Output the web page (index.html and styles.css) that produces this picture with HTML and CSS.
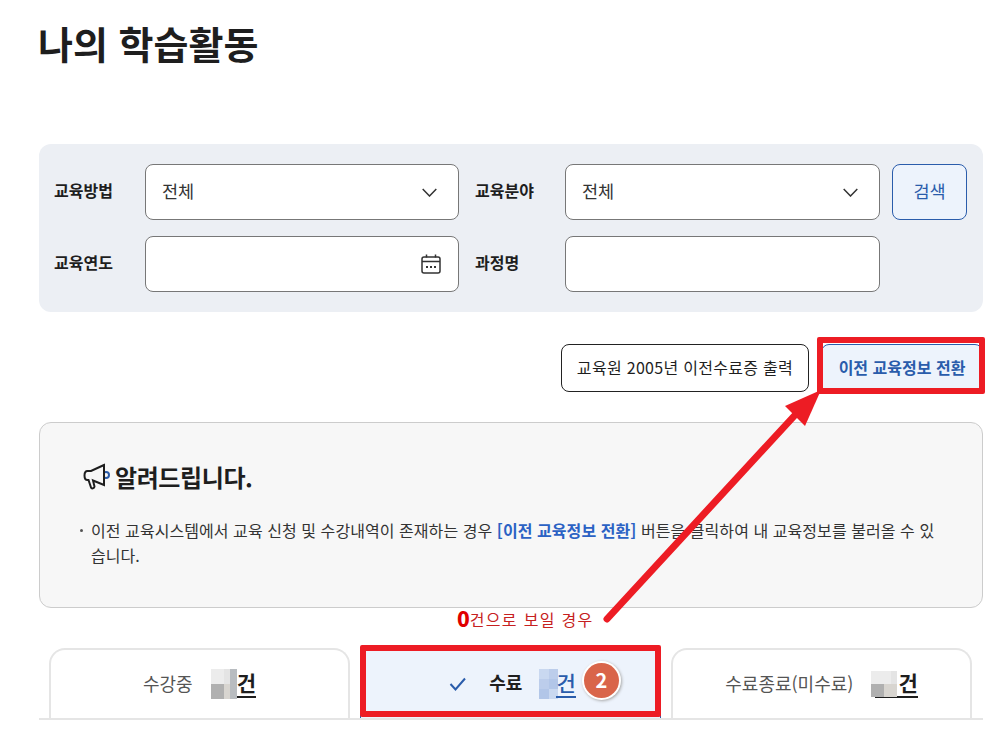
FILE: index.html
```html
<!DOCTYPE html>
<html lang="ko">

<head>
    <meta charset="UTF-8">
    <meta name="viewport" content="width=device-width, initial-scale=1.0">
    <title>나의 학습활동</title>
    <link rel="stylesheet" href="styles.css">
</head>

<body>
    <div class="page">
        <h1>나의 학습활동</h1>

        <form class="filter">
            <label class="filter-label">교육방법</label>
            <div class="field">
                <span>전체</span>
                <svg class="chevron" width="15" height="9" viewBox="0 0 15 9"><path d="M.7 1 7.500 8 14.300 1" /></svg>
            </div>
            <label class="filter-label filter-label-right">교육분야</label>
            <div class="field">
                <span>전체</span>
                <svg class="chevron" width="15" height="9" viewBox="0 0 15 9"><path d="M.7 1 7.500 8 14.300 1" /></svg>
            </div>
            <button type="button" class="search">검색</button>
            <label class="filter-label">교육연도</label>
            <div class="field">
                <span></span>
                <svg class="calendar" width="22" height="22" viewBox="0 0 22 22">
                    <rect x="2" y="4" width="18" height="16" rx="2" />
                    <path d="M2 8.500H20M6.500 1.500V4.500M15.500 1.500V4.500" />
                    <path class="dots" d="M6 14H8M10 14H12M14 14H16" />
                </svg>
            </div>
            <label class="filter-label filter-label-right">과정명</label>
            <div class="field"></div>
        </form>

        <div class="actions">
            <button type="button" class="btn-print">교육원 2005년 이전수료증 출력</button>
            <button type="button" class="btn-switch">이전 교육정보 전환</button>
        </div>

        <section class="notice">
            <h2>
                <svg width="27" height="28" viewBox="0 0 27 28">
                    <circle class="horn-dot" cx="23" cy="13" r="3" />
                    <path d="M21 3 8 9H4.500C2.500 9 1.500 11 1.500 13.500S2.500 18 4.500 18H5.500L8 25.500C8.500 27 11.500 26.500 11.500 24.500L10 18.500 21 23Z" />
                </svg>
                알려드립니다.
            </h2>
            <ul>
                <li>이전 교육시스템에서 교육 신청 및 수강내역이 존재하는 경우 <b>[이전 교육정보 전환]</b> 버튼을 클릭하여 내 교육정보를 불러올 수 있습니다.</li>
            </ul>
        </section>

        <p class="zero-note"><b>0</b>건으로 보일 경우</p>

        <div class="tabs">
            <div class="tab">
                <span class="tab-name">수강중</span>
                <span class="count"><span class="blur"><i class="p1"></i><i class="p1"></i><i class="p5"></i><i class="p4"></i><i class="p3"></i><i class="p3"></i><i class="p2"></i><i class="p4"></i></span><u>건</u></span>
            </div>
            <div class="tab tab-active">
                <svg class="check" width="18" height="14" viewBox="0 0 18 14"><path d="M1.500 7 6.500 12.500 16 1.500" /></svg>
                <span class="tab-name">수료</span>
                <span class="count"><span class="blur blur-blue"><i class="b1"></i><i class="b2"></i><i class="b2"></i><i class="b3"></i><i class="b3"></i><i class="b1"></i></span><u>건</u></span>
            </div>
            <div class="tab">
                <span class="tab-name">수료종료(미수료)</span>
                <span class="count count-wide"><span class="blur blur-short"><i class="p1"></i><i class="p1"></i><i class="p1"></i><i class="p5"></i><i class="p3"></i><i class="p3"></i><i class="p2"></i><i class="p2"></i></span><u>건</u></span>
            </div>
        </div>
    </div>

    <!-- screenshot annotations -->
    <div class="mark mark-switch"></div>
    <div class="mark mark-tab"></div>
    <div class="badge">2</div>
    <svg class="arrow" width="1003" height="737" viewBox="0 0 1003 737">
        <path class="arrow-line" d="M607 619 796 414" />
        <path class="arrow-head" d="M821 390 785 406 805 426Z" />
    </svg>
</body>

</html>
```

FILE: styles.css
```css
body {
    margin: 0;
    font-family: "Noto Sans CJK KR", "Noto Sans", sans-serif;
    color: #1e1e1e;
    background: #fff;
    overflow: hidden;
}

.page {
    width: 944px;
    height: 737px;
    padding-left: 39px;
    overflow: hidden;
}

h1 {
    margin: 0 0 0 -1px;
    height: 144px;
    padding-top: 17px;
    box-sizing: border-box;
    font-size: 38px;
    line-height: 52px;
    font-weight: 700;
}

.filter {
    display: grid;
    grid-template-columns: 106px 314px 106px 315px 75px;
    grid-auto-rows: 56px;
    row-gap: 16px;
    align-items: center;
    height: 168px;
    box-sizing: border-box;
    padding: 20px 16px 20px 0;
    background: #eceff4;
    border-radius: 12px;
}

.filter-label {
    padding: 0 0 4px 15px;
    font-size: 16px;
    font-weight: 700;
}

.filter-label-right {
    padding-left: 16px;
}

.field {
    display: flex;
    justify-content: space-between;
    align-items: center;
    height: 56px;
    box-sizing: border-box;
    padding: 0 21px 0 16px;
    background: #fff;
    border: 1px solid #777;
    border-radius: 8px;
    font-size: 17.500px;
    color: #333;
}

.field span {
    padding-bottom: 4px;
}

.field .calendar {
    margin-right: -5px;
}

.chevron path {
    fill: none;
    stroke: #333;
    stroke-width: 1.500;
}

.calendar rect,
.calendar path {
    fill: none;
    stroke: #333;
    stroke-width: 1.500;
}

.calendar .dots {
    stroke-width: 2;
}

.search {
    height: 56px;
    margin-left: 12px;
    width: 75px;
    padding: 0 0 4px;
    font: inherit;
    font-size: 17.500px;
    color: #2a5cab;
    background: #edf3fc;
    border: 1px solid #2a5cab;
    border-radius: 8px;
}

.actions {
    display: flex;
    justify-content: flex-end;
    align-items: center;
    gap: 12px;
    height: 48px;
    margin-top: 32px;
}

.actions button {
    height: 48px;
    padding: 0 0 3px;
    font: inherit;
    font-size: 16px;
}

.btn-print {
    width: 248px;
    background: #fff;
    color: #1e1e1e;
    border: 1px solid #222;
    border-radius: 8px;
    letter-spacing: 0.300px;
}

.btn-switch {
    width: 162px;
    color: #2a5cab;
    background: #edf3fc;
    border: 1px solid #2a5cab;
    border-radius: 8px;
}

.actions .btn-switch {
    font-weight: 700;
}

.notice {
    height: 186px;
    box-sizing: border-box;
    margin-top: 30px;
    padding: 34px 42px 0;
    background: #f7f7f7;
    border: 1px solid #ccc;
    border-radius: 12px;
}

.notice h2 {
    display: flex;
    align-items: center;
    gap: 5px;
    margin: 0;
    height: 38px;
    font-size: 24px;
    font-weight: 700;
    letter-spacing: -0.400px;
    color: #1e1e1e;
}

.notice h2 svg {
    margin-left: 1px;
}

.notice h2 path {
    fill: #f7f7f7;
    stroke: #1e1e1e;
    stroke-width: 2;
}

.horn-dot {
    fill: none;
    stroke: #2a5cab;
    stroke-width: 2;
}

.notice ul {
    margin: 23px 0 0;
    padding: 0 0 0 9px;
    list-style: none;
}

.notice li {
    position: relative;
    font-size: 16px;
    line-height: 25px;
    letter-spacing: 0.060px;
    color: #333;
}

.notice li::before {
    content: "";
    position: absolute;
    left: -11px;
    top: 11px;
    width: 3px;
    height: 3px;
    border-radius: 50%;
    background: #555;
}

.notice li b {
    font-weight: 700;
    color: #2b62c4;
}

.zero-note {
    margin: 0;
    height: 40px;
    box-sizing: border-box;
    padding-left: 418px;
    font-size: 16px;
    line-height: 20px;
    letter-spacing: 1.300px;
    color: #c62020;
}

.zero-note b {
    font-size: 21px;
    font-weight: 900;
    color: #e00000;
    letter-spacing: 0;
    vertical-align: -1px;
}

.tabs {
    display: grid;
    grid-template-columns: repeat(3, 301px);
    gap: 10px;
    height: 70px;
    padding-left: 10px;
    border-bottom: 2px solid #e5e5e5;
}

.tab {
    display: flex;
    justify-content: center;
    align-items: center;
    gap: 18px;
    box-sizing: border-box;
    height: 70px;
    border: 2px solid #e5e5e5;
    border-bottom: 0;
    border-radius: 16px 16px 0 0;
    font-size: 18px;
    color: #555;
}

.tab-name {
    padding-bottom: 3px;
}

.tab-active {
    gap: 17px;
    padding-left: 4px;
    border: 1px solid #2a5cab;
    border-bottom: 0;
    border-radius: 0;
    background: #edf3fc;
    color: #1e1e1e;
    font-weight: 700;
}

.tab-active .check {
    margin-right: 5px;
}

.check path {
    fill: none;
    stroke: #2a5cab;
    stroke-width: 2;
}

.count {
    display: inline-flex;
    align-items: center;
    font-size: 21px;
    font-weight: 700;
    color: #1e1e1e;
}

.count u {
    display: block;
    height: 28px;
    line-height: 24px;
    box-sizing: border-box;
    text-decoration: none;
    border-bottom: 2px solid currentColor;
}

.tab-active .count {
    color: #2a5cab;
    font-weight: 500;
}

.blur {
    display: grid;
    grid-template-columns: repeat(4, 6.500px);
    grid-auto-rows: 15px;
    width: 26px;
}

.blur i {
    display: block;
}

.blur .p1 { background: #ececec; }
.blur .p2 { background: #d8d5d0; }
.blur .p3 { background: #b0b0b0; }
.blur .p4 { background: #b8bcc0; }
.blur .p5 { background: #e4e4e4; }

.blur-blue {
    grid-template-columns: repeat(2, 9.500px);
    grid-auto-rows: 10px;
    width: 19px;
    margin-right: -2px;
}

.blur .b1 { background: #c9d8f0; }
.blur .b2 { background: #bccdeb; }
.blur .b3 { background: #b2c6e8; }

.blur-short {
    grid-auto-rows: 13px;
    margin-right: -22px;
    position: relative;
    z-index: 1;
}

.count-wide u {
    padding-left: 23px;
}

.mark {
    position: absolute;
    box-sizing: border-box;
    border: 6px solid #ed1c24;
    border-radius: 2px;
}

.mark-switch {
    left: 817px;
    top: 337px;
    width: 168px;
    height: 57px;
}

.mark-tab {
    left: 360px;
    top: 645px;
    width: 301px;
    height: 72px;
}

.badge {
    position: absolute;
    left: 584px;
    top: 663px;
    width: 35px;
    height: 35px;
    box-sizing: border-box;
    border-radius: 50%;
    background: #d9654a;
    color: #fff;
    font-size: 20px;
    font-weight: 700;
    line-height: 34px;
    text-align: center;
    box-shadow: 0 0 0 2px #fff, 1px 1px 3px 2px #aaa;
}

.arrow {
    position: absolute;
    left: 0;
    top: 0;
    pointer-events: none;
}

.arrow-line {
    fill: none;
    stroke: #ed1c24;
    stroke-width: 7;
    stroke-linecap: round;
}

.arrow-head {
    fill: #ed1c24;
}
```
